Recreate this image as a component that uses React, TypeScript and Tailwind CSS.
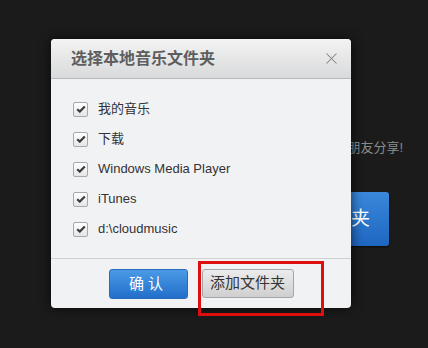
import { X } from 'lucide-react';

const folders = ['我的音乐', '下载', 'Windows Media Player', 'iTunes', 'd:\\cloudmusic'];

function Check() {
  return (
    <span className="flex h-[15px] w-[15px] items-center justify-center rounded-[2px] border border-[#a9a9a9] bg-gradient-to-b from-white to-[#e6e6e6]">
      <svg width="10" height="8" viewBox="0 0 10 8">
        <path d="M1.2 4.2 L3.8 6.6 L8.8 1.4" fill="none" stroke="#3c3c3c" strokeWidth="2.2" />
      </svg>
    </span>
  );
}

export default function App() {
  return (
    <div className="relative h-[348px] w-[428px] overflow-hidden bg-[#1b1b1b]" style={{ fontFamily: '"Liberation Sans", "Noto Sans CJK SC", sans-serif' }}>
      {/* page behind the dialog */}
      <div className="flex flex-col items-end pt-[140px]">
        <p className="mr-[25px] text-[13px] leading-[16px] text-[#8a8a8a]">扫描本地音乐，与朋友分享!</p>
        <button className="mr-[39px] mt-[36px] flex h-[54px] w-[130px] items-center justify-end rounded-[3px] bg-gradient-to-b from-[#3a88dc] to-[#1f66c0] pr-[19px] text-[19px] text-white shadow-[0_1px_2px_rgba(0,0,0,0.6)]">
          添加文件夹
        </button>
      </div>

      {/* dialog */}
      <div className="absolute left-[51px] top-[39px] w-[300px] overflow-hidden rounded-[4px] bg-[#f1f2f4] shadow-[0_0_12px_rgba(0,0,0,0.7)]">
        <div className="flex h-[40px] items-center justify-between border-b border-[#b9b9b9] bg-gradient-to-b from-[#f3f3f3] to-[#d9dadb] pl-[20px] pr-[10px]">
          <span className="text-[16px] font-bold text-[#5e5e5e]">选择本地音乐文件夹</span>
          <X className="h-[19px] w-[19px] text-[#808080]" strokeWidth={1.3} />
        </div>
        <div className="border-b border-[#cfd0d2] pb-[14px] pl-[22px] pt-[15px]">
          {folders.map((f) => (
            <div key={f} className="flex h-[30px] items-center gap-[10px]">
              <Check />
              <span className="text-[13px] text-[#333]">{f}</span>
            </div>
          ))}
        </div>
        <div className="flex h-[49px] items-start justify-center gap-[14px] pt-[10px]">
          <button className="h-[30px] w-[79px] rounded-[3px] border border-[#2a6cbc] bg-gradient-to-b from-[#4a9ae6] to-[#226fcb] text-[15px] tracking-[4px] text-white">
            确认
          </button>
          <button className="h-[29px] w-[92px] rounded-[3px] border border-[#a5a5a5] bg-gradient-to-b from-[#ececec] to-[#cfcfcf] text-[15px] text-[#333]">
            添加文件夹
          </button>
        </div>
      </div>

      {/* highlight annotation */}
      <div className="absolute left-[198px] top-[261px] h-[55px] w-[126px] border-[3px] border-[#e00f0f]" />
    </div>
  );
}
